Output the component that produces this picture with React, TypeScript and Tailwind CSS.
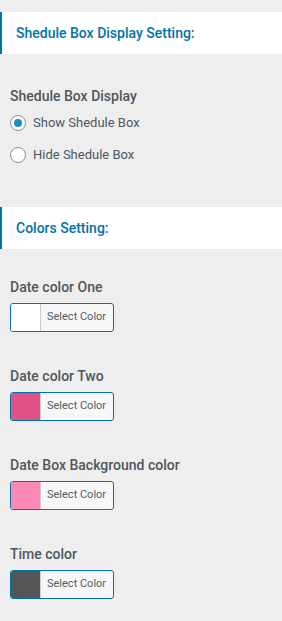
import React from "react";

const colorFields = [
  { label: "Date color One", color: "#ffffff" },
  { label: "Date color Two", color: "#e05287" },
  { label: "Date Box Background color", color: "#fe88b5" },
  { label: "Time color", color: "#555555" },
];

const SectionHeader: React.FC<{ title: string }> = ({ title }) => (
  <div className="h-[42px] bg-white border-l-2 border-[#0073aa] pl-[14px] flex items-center">
    <h2 className="text-[14px] font-medium text-[#0073aa] leading-none">{title}</h2>
  </div>
);

const Radio: React.FC<{ checked?: boolean; label: string }> = ({ checked, label }) => (
  <label className="flex items-center gap-[7px] h-[32px]">
    <span className="w-[16px] h-[16px] rounded-full border border-[#8c8f94] bg-white flex items-center justify-center shrink-0">
      {checked && <span className="w-[8px] h-[8px] rounded-full bg-[#1e8cbe]" />}
    </span>
    <span className="text-[13px] text-[#50575e]">{label}</span>
  </label>
);

const ColorButton: React.FC<{ color: string }> = ({ color }) => (
  <button className="flex h-[29px] w-[104px] rounded-[3px] border border-[#0073aa] overflow-hidden bg-[#f7f7f7]">
    <span className="w-[30px] h-full border-r border-[#cccccc]" style={{ backgroundColor: color }} />
    <span className="flex-1 flex items-center pl-[6px] text-[11px] text-[#555d66]">Select Color</span>
  </button>
);

export default function App() {
  return (
    <div
      className="min-h-[621px] w-full bg-[#eeeeee] pt-[12px]"
      style={{ fontFamily: "Roboto, 'Noto Sans', sans-serif" }}
    >
      <SectionHeader title="Shedule Box Display Setting:" />

      <div className="px-[10px] pt-[32px] pb-[36px]">
        <h3 className="text-[14px] font-medium text-[#50575e] leading-[20px] mb-[1px]">Shedule Box Display</h3>
        <div className="flex flex-col">
          <Radio checked label="Show Shedule Box" />
          <Radio label="Hide Shedule Box" />
        </div>
      </div>

      <SectionHeader title="Colors Setting:" />

      <div className="px-[10px] pt-[28px] flex flex-col gap-[34px]">
        {colorFields.map((field) => (
          <div key={field.label} className="flex flex-col gap-[6px]">
            <h3 className="text-[14px] font-medium text-[#50575e] leading-[20px]">{field.label}</h3>
            <ColorButton color={field.color} />
          </div>
        ))}
      </div>
    </div>
  );
}
